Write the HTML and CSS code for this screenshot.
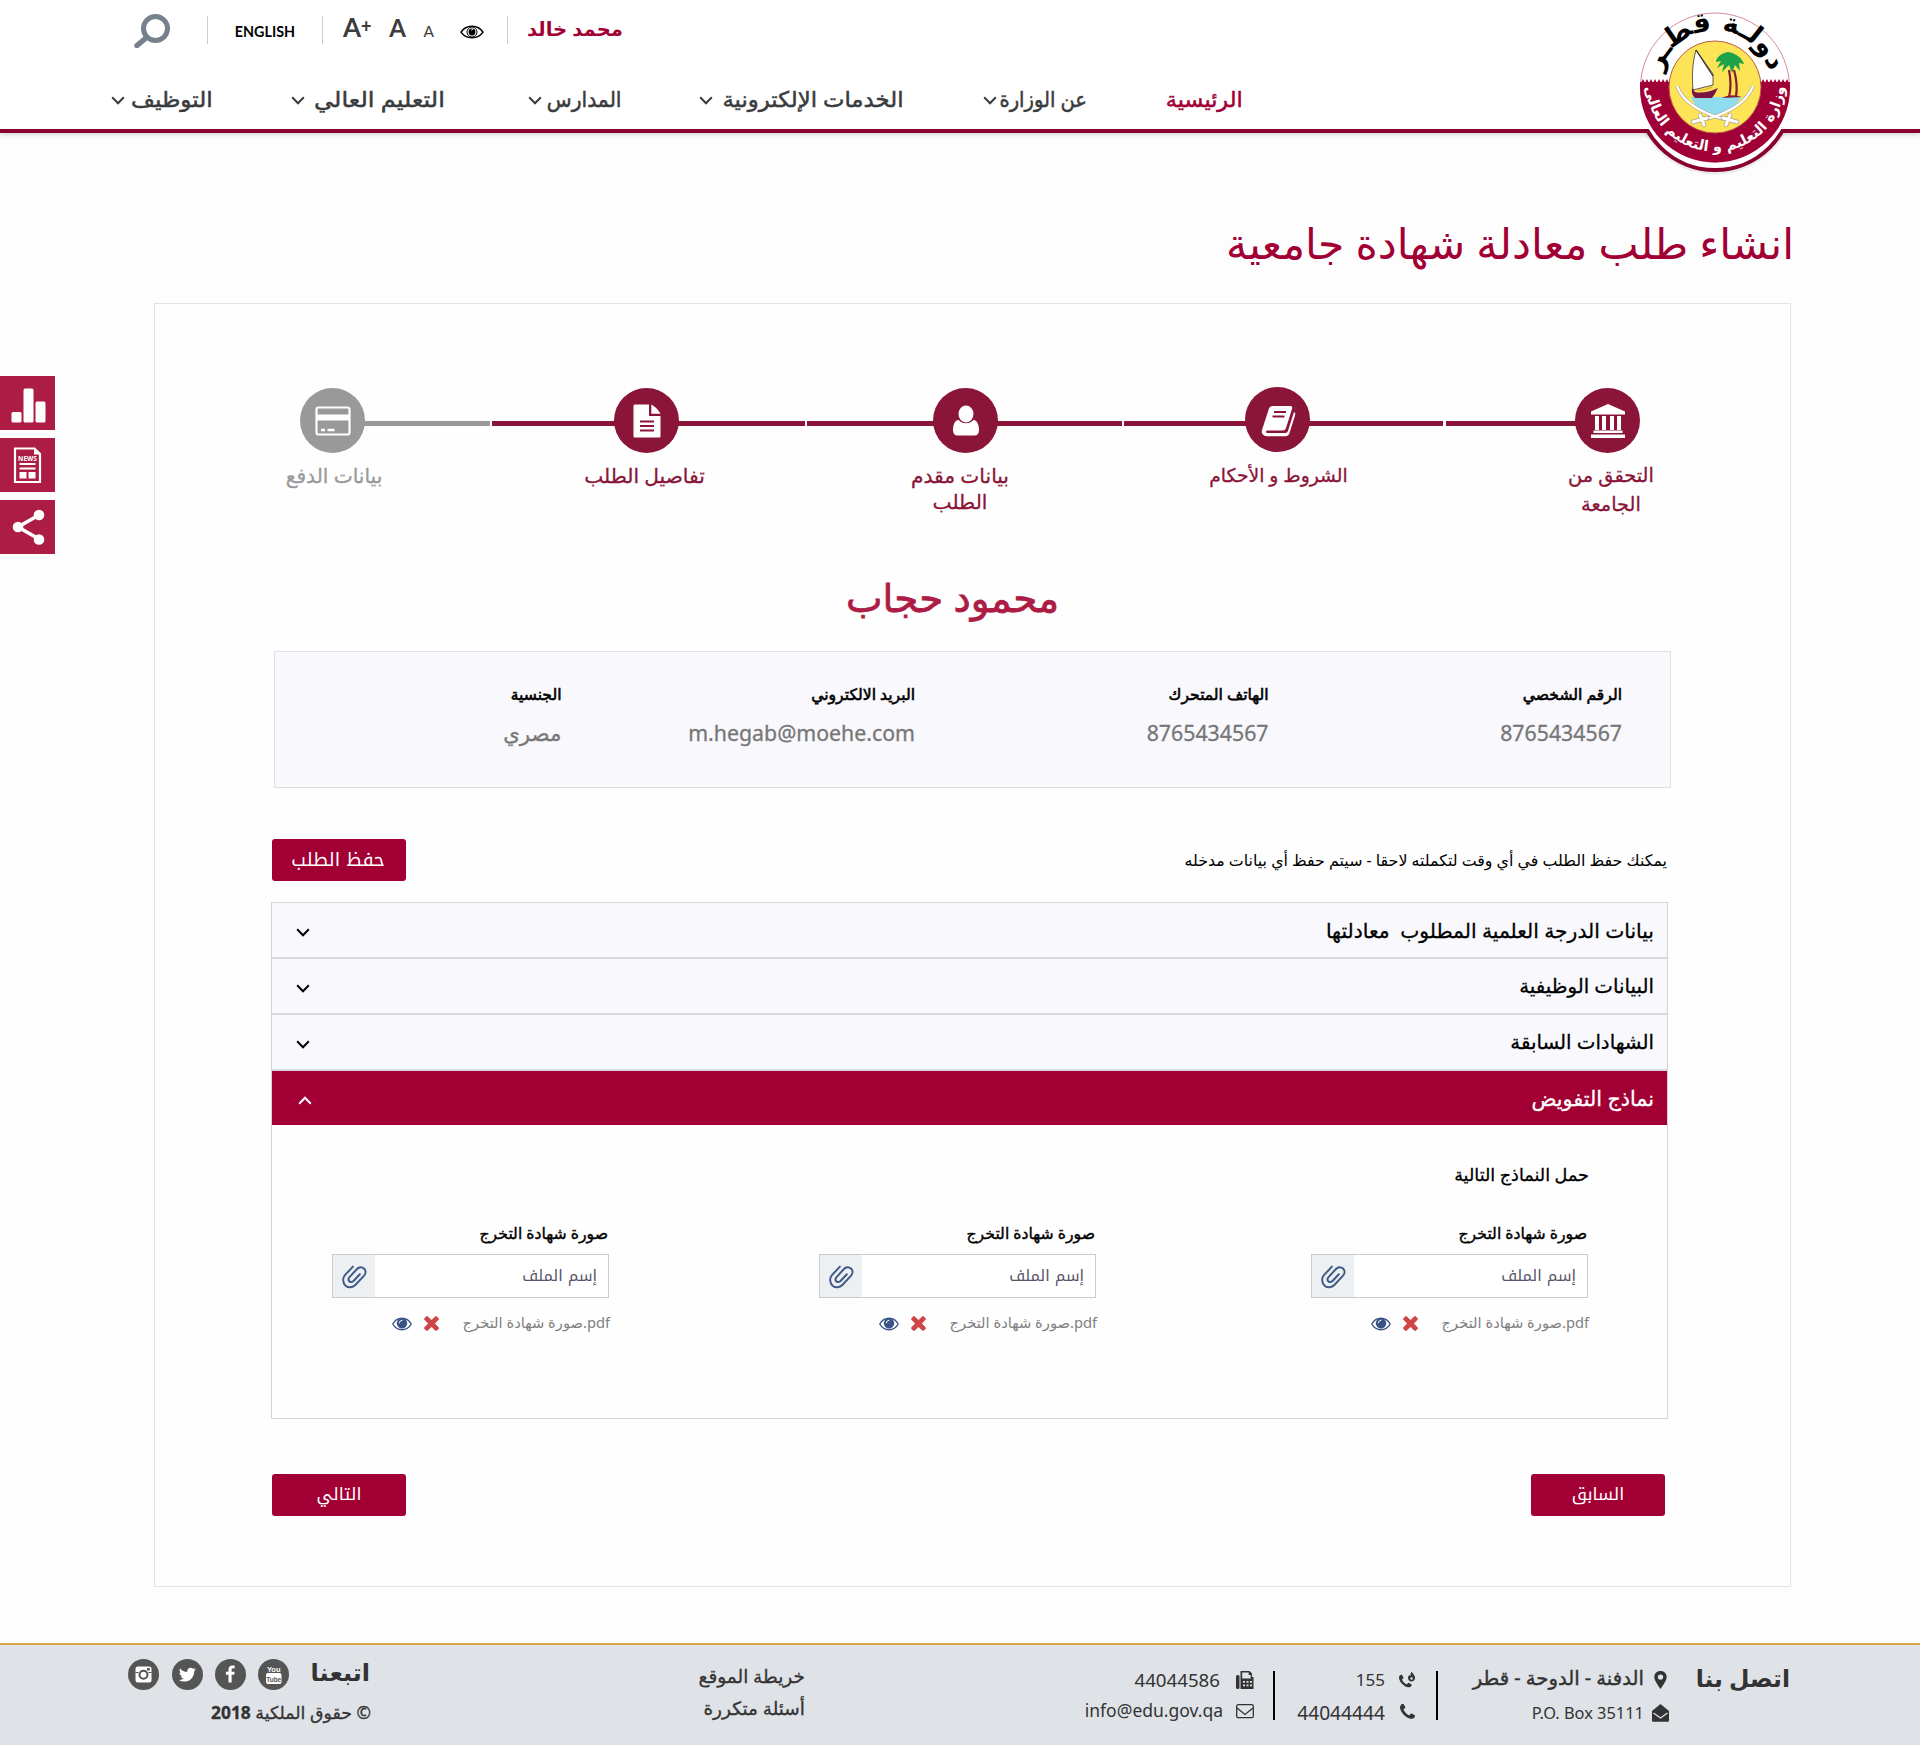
FILE: index.html
```html
<!DOCTYPE html>
<html lang="ar" dir="rtl">
<head>
<meta charset="utf-8">
<title>انشاء طلب معادلة شهادة جامعية</title>
<link rel="stylesheet" href="styles.css">
</head>
<body>
<svg width="0" height="0" class="defs" aria-hidden="true">
  <symbol id="chev" viewBox="0 0 14 9"><path d="M1.2 1.3 7 7.2l5.800-5.900" fill="none" stroke="currentColor" stroke-width="2"/></symbol>
  <symbol id="eye" viewBox="0 0 20 14"><path d="M.8 7C5-.6 15-.6 19.200 7 15 14.600 5 14.600.8 7z" fill="none" stroke="currentColor" stroke-width="1.400"/><circle cx="10" cy="6.300" r="5.200" fill="currentColor"/><path d="M7.300 5.800q.3-2.400 2.700-2.600" fill="none" stroke="#fff" stroke-width="1" stroke-linecap="round"/></symbol>
  <symbol id="times" viewBox="296 290 1200 1200"><path d="M1490 1322q0 40-28 68l-136 136q-28 28-68 28t-68-28l-294-294-294 294q-28 28-68 28t-68-28l-136-136q-28-28-28-68t28-68l294-294-294-294q-28-28-28-68t28-68l136-136q28-28 68-28t68 28l294 294 294-294q28-28 68-28t68 28l136 136q28 28 28 68t-28 68l-294 294 294 294q28 28 28 68z" transform="translate(0 -70)" fill="currentColor"/></symbol>
  <symbol id="clip" viewBox="0 0 24 24"><path d="M10.500 2.500 3 10.500C.3 13.600.6 18.200 3.500 20.800c2.800 2.400 6.800 1.900 9.300-.6l8.400-9c1.900-2.200 1.800-5-.1-6.800-2-1.800-4.800-1.600-6.700.4L7.200 12.600c-1.200 1.400-1.200 3 0 4.100 1.100 1 2.800.9 3.900-.4l6-6.500" fill="none" stroke="currentColor" stroke-width="1.900" stroke-linecap="round"/></symbol>
  <symbol id="phone" viewBox="192 192 1408 1408"><path d="M1600 1240q0 27-10 70.500t-21 68.500q-21 50-122 106-94 51-186 51-27 0-53-3.500t-57.500-12.500-47-14.500-55.500-20.500-49-18q-98-35-175-83-127-79-264-216t-216-264q-48-77-83-175-3-9-18-49t-20.500-55.500-14.500-47-12.500-57.500-3.500-53q0-92 51-186 56-101 106-122 25-11 68.500-21t70.500-10q14 0 21 3 18 6 53 76 11 19 30 54t35 63.500 31 53.500q3 4 17.500 25t21.500 35.500 7 28.500q0 20-28.500 50t-62 55-62 53-28.500 46q0 9 5 22.500t8.500 20.500 14 24 11.500 19q76 137 174 235t235 174q2 1 19 11.500t24 14 20.500 8.500 22.500 5q18 0 46-28.500t53-62 55-62 50-28.500q14 0 28.500 7t35.500 21.500 25 17.500q25 15 53.500 31t63.500 35 54 30q70 35 76 53 3 7 3 21z" fill="currentColor"/></symbol>
</svg>

<header class="header">
  <div class="topbar">
    <span class="user">محمد خالد</span>
    <i class="divider"></i>
    <svg class="look" viewBox="0 0 24 14"><path d="M1 7.200C6-.8 18-.8 23 7.200 18 14.600 6 14.600 1 7.200z" fill="none" stroke="#000" stroke-width="1.500"/><circle cx="12" cy="7" r="5" fill="none" stroke="#000" stroke-width="1"/><circle cx="12" cy="7" r="3.400"/><path d="M11.500 5.500q.2-1.500 1.700-1.300" stroke="#fff" fill="none"/></svg>
    <div class="sizes" dir="ltr"><span class="big">A<b>+</b></span><span class="mid">A</span><span class="small">A</span></div>
    <i class="divider"></i>
    <span class="lang">ENGLISH</span>
    <i class="divider"></i>
    <svg class="search" viewBox="0 0 36 34"><circle cx="21.500" cy="14.500" r="12" fill="none" stroke="#76818d" stroke-width="5"/><path d="M12.500 23.500 3 31.500" stroke="#76818d" stroke-width="5.500" stroke-linecap="round"/></svg>
  </div>
  <nav class="nav">
    <a class="on"><span>الرئيسية</span></a>
    <a><span>عن الوزارة</span><svg><use href="#chev"/></svg></a>
    <a><span>الخدمات الإلكترونية</span><svg><use href="#chev"/></svg></a>
    <a><span>المدارس</span><svg><use href="#chev"/></svg></a>
    <a><span>التعليم العالي</span><svg><use href="#chev"/></svg></a>
    <a><span>التوظيف</span><svg><use href="#chev"/></svg></a>
  </nav>
  <svg class="logo" viewBox="0 0 180 190">
    <defs>
      <clipPath id="under"><rect x="0" y="129" width="180" height="61"/></clipPath>
      <clipPath id="lower"><rect x="0" y="82" width="180" height="90"/></clipPath>
      <path id="arcTop" d="M34.500 79A56 56 0 0 1 145.500 79"/>
      <path id="arcLow" d="M20.500 82A69.500 69.500 0 0 0 159.500 82"/>
    </defs>
    <rect x="23" y="120" width="134" height="14" fill="#fff"/>
    <g clip-path="url(#under)"><circle cx="90" cy="93.500" r="81" class="glow"/><circle cx="90" cy="92.500" r="77.500" fill="#fff" stroke="#8a0030" stroke-width="4"/></g>
    <circle cx="90" cy="87.500" r="74.500" fill="#fff" stroke="#d98aa3" stroke-width="1"/>
    <circle cx="90" cy="87.500" r="75" fill="#a00036" clip-path="url(#lower)"/>
    <path d="M16 83l2-4 2 4 2-4 2 4 2-4 2 4 2-4 2 4 2-4 2 4 2-4 2 4 2-4 2 4M136 83l2-4 2 4 2-4 2 4 2-4 2 4 2-4 2 4 2-4 2 4 2-4 2 4 2-4 2 4" fill="#a00036"/>
    <circle cx="90" cy="87" r="46" fill="#fde456" stroke="#b85a4a" stroke-width="1"/>
    <path d="M71 50c-4 14-4 28-3 40l20-5V74z" fill="#fff" stroke="#333" stroke-width=".8"/>
    <path d="M71 50l17 26" stroke="#333" stroke-width="1.300"/>
    <path d="M66 97h50l-8 12q-18 14-36 0z" fill="#8fdcef"/>
    <path d="M67 88l3 4q10 2 23-4-3 6-6 10H70q-4-4-3-10z" fill="#7b1541"/>
    <path d="M72 90q8 1 15-3" stroke="#e7b53a" stroke-width="1.500" fill="none"/>
    <path d="M104 70q3 15 0 27M109 70q4 14 2 27" stroke="#8b1a2b" stroke-width="2.200" fill="none"/>
    <path d="M97 98q8-5 20-1z" fill="#8b1a2b"/>
    <path d="M103 52c-6 1-12 5-12 10l5-1-4 7 7-4-2 8 7-7 3 8 3-8 5 6-1-8 5 1c-2-6-8-11-16-12z" fill="#1da34a"/>
    <path d="M52 86q8 22 46 33M128 86q-8 22-46 33" fill="none" stroke="#a79f8a" stroke-width="3.600"/>
    <path d="M52 86q8 22 46 33M128 86q-8 22-46 33" fill="none" stroke="#fff" stroke-width="2.200"/>
    <path d="M98 118l14 4M101 125l4-10M82 118l-14 4M79 125l-4-10" stroke="#a79f8a" stroke-width="4.500" stroke-linecap="round"/>
    <path d="M98 118l14 4M101 125l4-10M82 118l-14 4M79 125l-4-10" stroke="#fff" stroke-width="3" stroke-linecap="round"/>
    <text class="state"><textPath href="#arcTop" startOffset="50%" text-anchor="middle">دولـة قطـر</textPath></text>
    <text class="ministry"><textPath href="#arcLow" startOffset="50%" text-anchor="middle">وزارة التعليم و التعليم العالى</textPath></text>
  </svg>
</header>

<aside class="side">
  <a><svg viewBox="0 0 55 54"><g fill="#fff"><rect x="11.500" y="36" width="10" height="10.500" rx="1.500"/><rect x="23.500" y="12.500" width="10" height="34" rx="1.500"/><rect x="35.500" y="25.500" width="10" height="21" rx="1.500"/></g></svg></a>
  <a><svg viewBox="0 0 55 54"><path d="M15 10.500h19.500l5.500 5.500v28H15z" fill="none" stroke="#fff" stroke-width="2.200"/><path d="M34 10v6.500h6.500z" fill="#fff"/><text x="27.500" y="23" class="news">NEWS</text><g fill="#fff"><rect x="19.500" y="25" width="16" height="2"/><rect x="19.500" y="29.500" width="16" height="2"/><rect x="19.500" y="34" width="7" height="6.500"/><rect x="28.500" y="34" width="7" height="6.500"/></g></svg></a>
  <a><svg viewBox="0 0 55 54"><path d="M39 15 18 27l21 12" fill="none" stroke="#fff" stroke-width="3.600"/><g fill="#fff"><circle cx="39" cy="15" r="5.300"/><circle cx="18" cy="27" r="5.300"/><circle cx="39" cy="39.500" r="5.300"/></g></svg></a>
</aside>

<main>
  <h1>انشاء طلب معادلة شهادة جامعية</h1>
  <section class="card">
    <ol class="steps">
      <li class="s1"><div class="rail"><b><svg viewBox="0 0 36 36"><g fill="#fff"><path d="M18 1 35 8.500v3H1v-3z"/><path d="M5 13h4v14H5zM12 13h4v14h-4zM20 13h4v14h-4zM27 13h4v14h-4z"/><path d="M3.500 27.500h29V30h-29zM1 31.500h34V35H1z"/></g></svg></b></div><p>التحقق من<br>الجامعة</p></li>
      <li class="s2"><div class="rail"><b><svg viewBox="0 0 36 36"><path d="M13 4h17c2 0 2.600 1 2 3l-6 19c-.5 1.700-1.500 2.500-3.500 2.500H7.500c-2 0-2 2.500 0 2.500H25c2 0 2.600-1 3.200-2.800L34 10c1.500 1 1.500 2 1 3.500L29.500 31c-.8 2.300-2 3.200-4.300 3.200H7c-4 0-6-3-5-6.200L8.500 8C9.300 5.200 10.500 4 13 4z" fill="#fff"/><path d="M14 10h12M12.500 14.500h12" stroke="#8a1538" stroke-width="2"/></svg></b></div><p>الشروط و الأحكام</p></li>
      <li class="s3"><div class="rail"><b><svg viewBox="0 0 36 36"><ellipse cx="18" cy="11" rx="7.500" ry="8.500" fill="#fff"/><path d="M10.500 17c2 2 4.500 3.300 7.500 3.300s5.500-1.300 7.500-3.300c4 .5 5.500 5 5.500 10.500 0 3-1.800 5-4.600 5H9.600C6.800 32.500 5 30.500 5 27.500 5 22 6.500 17.500 10.500 17z" fill="#fff"/></svg></b></div><p>بيانات مقدم<br>الطلب</p></li>
      <li class="s4"><div class="rail"><b><svg viewBox="0 0 36 36"><path d="M6 1.500h14V13h11.500v20c0 1-.5 1.500-1.500 1.500H6c-1 0-1.500-.5-1.500-1.500V3c0-1 .5-1.500 1.500-1.500z" fill="#fff"/><path d="M22.300 1.500c3.500 1.800 7.500 6 9.200 9.200h-9.200z" fill="#fff"/><path d="M11 18.500h14M11 23h14M11 27.500h14" stroke="#8a1538" stroke-width="2.200"/></svg></b></div><p>تفاصيل الطلب</p></li>
      <li class="s5"><div class="rail"><b><svg viewBox="0 0 36 36"><rect x="1.500" y="4.500" width="33" height="27" rx="2" fill="none" stroke="#fff" stroke-width="2.200"/><path d="M2 11.500h32v6H2z" fill="#fff"/><path d="M6 27h4M12.500 27h7" stroke="#fff" stroke-width="2.400"/></svg></b></div><p>بيانات الدفع</p></li>
    </ol>

    <h2>محمود حجاب</h2>

    <dl class="info">
      <div><dt>الرقم الشخصي</dt><dd>8765434567</dd></div>
      <div><dt>الهاتف المتحرك</dt><dd>8765434567</dd></div>
      <div><dt>البريد الالكتروني</dt><dd>m.hegab@moehe.com</dd></div>
      <div><dt>الجنسية</dt><dd>مصري</dd></div>
    </dl>

    <div class="save">
      <p>يمكنك حفظ الطلب في أي وقت لتكملته لاحقا - سيتم حفظ أي بيانات مدخله</p>
      <button>حفظ الطلب</button>
    </div>

    <div class="accordion">
      <div class="head degree"><span>بيانات الدرجة العلمية المطلوب &nbsp;معادلتها</span><svg><use href="#chev"/></svg></div>
      <div class="head"><span>البيانات الوظيفية</span><svg><use href="#chev"/></svg></div>
      <div class="head"><span>الشهادات السابقة</span><svg><use href="#chev"/></svg></div>
      <div class="head open"><span>نماذج التفويض</span><svg><use href="#chev"/></svg></div>
      <div class="panel">
        <h3>حمل النماذج التالية</h3>
        <div class="fields">
          <div class="field"><label>صورة شهادة التخرج</label><div class="input"><span>إسم الملف</span><i><svg><use href="#clip"/></svg></i></div><div class="file"><span>pdf.صورة شهادة التخرج</span><svg class="del"><use href="#times"/></svg><svg class="view"><use href="#eye"/></svg></div></div>
          <div class="field"><label>صورة شهادة التخرج</label><div class="input"><span>إسم الملف</span><i><svg><use href="#clip"/></svg></i></div><div class="file"><span>pdf.صورة شهادة التخرج</span><svg class="del"><use href="#times"/></svg><svg class="view"><use href="#eye"/></svg></div></div>
          <div class="field"><label>صورة شهادة التخرج</label><div class="input"><span>إسم الملف</span><i><svg><use href="#clip"/></svg></i></div><div class="file"><span>pdf.صورة شهادة التخرج</span><svg class="del"><use href="#times"/></svg><svg class="view"><use href="#eye"/></svg></div></div>
        </div>
      </div>
    </div>

    <div class="actions"><button>السابق</button><button>التالي</button></div>
  </section>
</main>

<footer class="footer">
  <h4 class="contact">اتصل بنا</h4>
  <ul class="col address">
    <li><svg viewBox="0 0 17 18"><path d="M8.500 0C4.800 0 2.300 2.600 2.300 6c0 3.200 3.500 8 6.200 12 2.700-4 6.200-8.800 6.200-12 0-3.400-2.500-6-6.200-6zm0 3.400a2.700 2.700 0 1 1 0 5.400 2.700 2.700 0 0 1 0-5.400z"/></svg><span class="place">الدفنة - الدوحة - قطر</span></li>
    <li><svg viewBox="0 0 17 18"><path d="M0 7 8.500 0 17 7v9.500c0 .8-.5 1.300-1.300 1.300H1.300C.5 17.800 0 17.300 0 16.500z"/><path d="M1.500 9l7 5 7-5" fill="none" stroke="#dfe2e7" stroke-width="1.200"/></svg><span dir="ltr">P.O. Box 35111</span></li>
  </ul>
  <i class="bar"></i>
  <ul class="col phones">
    <li><svg viewBox="0 0 18 18"><g transform="translate(0 4) scale(.0095) translate(-192 -192)"><path d="M1600 1240q0 27-10 70.500t-21 68.500q-21 50-122 106-94 51-186 51-27 0-53-3.500t-57.500-12.500-47-14.500-55.500-20.500-49-18q-98-35-175-83-127-79-264-216t-216-264q-48-77-83-175-3-9-18-49t-20.500-55.500-14.500-47-12.500-57.500-3.500-53q0-92 51-186 56-101 106-122 25-11 68.500-21t70.500-10q14 0 21 3 18 6 53 76 11 19 30 54t35 63.500 31 53.500q3 4 17.500 25t21.500 35.500 7 28.500q0 20-28.500 50t-62 55-62 53-28.500 46q0 9 5 22.500t8.500 20.500 14 24 11.500 19q76 137 174 235t235 174q2 1 19 11.500t24 14 20.500 8.500 22.500 5q18 0 46-28.500t53-62 55-62 50-28.500q14 0 28.500 7t35.500 21.500 25 17.500q25 15 53.500 31t63.500 35 54 30q70 35 76 53 3 7 3 21z"/></g><path d="M13.500 0c.8 2.600 3.500 3.500 3.500 6.700 0 2.400-1.700 3.900-3.800 3.900S9.500 9 9.500 7c0-1.600.8-2.600 1.600-3.500.2 1 .5 1.500 1 1.800C12 3.500 12.300 1.500 13.500 0z"/><circle cx="13.300" cy="7.500" r="1.300" fill="#dfe2e7"/></svg><span class="hot">155</span></li>
    <li><svg class="handset"><use href="#phone"/></svg><span>44044444</span></li>
  </ul>
  <i class="bar"></i>
  <ul class="col fax">
    <li><svg viewBox="0 0 18 18"><rect x="0" y="4" width="3.500" height="14" rx="1.500"/><path d="M5 0h8.500L16 2.500V6h1.500v12H4.500V0z"/><path d="M6.200 1.500h6.500V4h2v3.500H6.200z" fill="#dfe2e7"/><path d="M7 10h2v1.700H7zm3.500 0h2v1.700h-2zM14 10h2v1.700h-2zM7 13.500h2v1.700H7zm3.500 0h2v1.700h-2zm3.500 0h2v1.700h-2z" fill="#dfe2e7"/></svg><span class="num">44044586</span></li>
    <li><svg class="mail" viewBox="0 0 18 18"><rect x=".7" y="2.700" width="16.600" height="13" rx="1.500" fill="none" stroke="#333" stroke-width="1.300"/><path d="M1 6l8 6.500L17 6" fill="none" stroke="#333" stroke-width="1.300"/></svg><span class="email">info@edu.gov.qa</span></li>
  </ul>
  <ul class="links"><li>خريطة الموقع</li><li>أسئلة متكررة</li></ul>
  <div class="follow">
    <div class="social">
      <h4>اتبعنا</h4>
      <svg viewBox="0 0 31 31"><circle cx="15.500" cy="15.500" r="15.500" fill="#555"/><rect x="8" y="14" width="15.500" height="11" rx="2" fill="#fff"/><text x="15.700" y="12.500" class="yt">You</text><text x="15.700" y="22.500" class="yt tube">Tube</text></svg>
      <svg viewBox="0 0 31 31"><circle cx="15.500" cy="15.500" r="15.500" fill="#555"/><path transform="translate(6 6.500) scale(.0102)" fill="#fff" d="M1343 12v264h-157q-86 0-116 36t-30 108v189h293l-39 296h-254v759h-306v-759h-255v-296h255v-218q0-186 104-288.500t277-102.500q147 0 228 12z"/></svg>
      <svg viewBox="0 0 31 31"><circle cx="15.500" cy="15.500" r="15.500" fill="#555"/><path transform="translate(5.700 6) scale(.0108)" fill="#fff" d="M1684 408q-67 98-162 167 1 14 1 42 0 130-38 259.500t-115.500 248.500-184.500 210.500-258 146-323 54.500q-271 0-496-145 35 4 78 4 225 0 401-138-105-2-188-64.500t-114-159.500q33 5 61 5 43 0 85-11-112-23-185.500-111.500t-73.500-205.500v-4q68 38 146 41-66-44-105-115t-39-154q0-88 44-163 121 149 294.500 238.500t371.500 99.500q-8-38-8-74 0-134 94.500-228.500t228.500-94.500q140 0 236 102 109-21 205-78-37 115-142 178 93-10 186-50z"/></svg>
      <svg viewBox="0 0 31 31"><circle cx="15.500" cy="15.500" r="15.500" fill="#555"/><rect x="7.500" y="7.500" width="16" height="16" rx="2.500" fill="#fff"/><path d="M7.500 13.500h3M20.500 13.500h3" stroke="#555" stroke-width="1"/><circle cx="15.500" cy="15.800" r="4" fill="none" stroke="#555" stroke-width="2"/><rect x="19" y="9" width="2.800" height="2.500" fill="#555"/></svg>
    </div>
    <p class="copy">© حقوق الملكية <b>2018</b></p>
  </div>
</footer>
</body>
</html>
```
FILE: styles.css
```css
* { box-sizing: border-box; margin: 0; padding: 0; }
body { width: 1920px; background: #fdfdfd; font-family: "Noto Sans", "DejaVu Sans", sans-serif; color: #000; white-space: nowrap; }
ul, ol { list-style: none; }
svg { display: block; flex: none; }
.defs { position: absolute; }

/* header */
.header { position: relative; height: 133px; background: #fff; border-bottom: 4px solid #8a0030; box-shadow: 0 2px 5px rgba(0,0,0,.16); }
.topbar { display: flex; align-items: center; height: 58px; padding: 0 1298px 0 134px; }
.user { width: 96px; margin-right: -1px; padding-left: 0; font-size: 19.600px; font-weight: 700; line-height: 28px; color: #a20034; }
.user + .divider { margin-right: 19px; }
.divider { width: 1px; height: 28px; background: #ccc; margin-top: 2px; }
.look { width: 24px; height: 14px; margin: 6px 23px 0 0; }
.sizes { display: flex; align-items: baseline; justify-content: space-between; width: 91px; margin-right: 26px; font-family: Lato, "Noto Sans", sans-serif; line-height: 30px; color: #3c3c3c; }
.sizes .big { font-size: 26px; font-weight: 700; }
.sizes b { font-size: 18px; position: relative; top: -4px; font-weight: 900; }
.sizes .mid { font-size: 24px; font-weight: 700; }
.sizes .small { font-size: 15.500px; }
.sizes + .divider { margin-right: 20px; }
.lang { width: 61px; margin: 6px 27px 0 0; font: 700 14.300px/20px Lato, "Noto Sans", sans-serif; }
.lang + .divider { margin-right: 26px; }
.search { width: 36px; height: 34px; margin: 3px 37px 0 0; }

.nav { display: flex; height: 71px; padding: 10px 677px 0 0; align-items: center; }
.nav a { display: flex; justify-content: space-between; align-items: center; font-size: 21.700px; line-height: 30px; color: #3a3b3d; }
.nav span { transform-origin: right; -webkit-text-stroke: .5px; }
.nav svg { width: 14px; height: 9px; margin-top: 4px; }
.nav a.on { color: #a20034; width: 76px; }
.nav a:nth-child(2) { width: 104px; margin-right: 80px; }
.nav a:nth-child(3) { width: 204px; margin-right: 80px; }
.nav a:nth-child(4) { width: 94px; margin-right: 77px; }
.nav a:nth-child(5) { width: 154px; margin-right: 83px; }
.nav a:nth-child(6) { width: 102px; margin-right: 78px; }
.nav a:nth-child(1) span { transform: scaleX(1.030); }
.nav a:nth-child(2) span { width: 88px; transform: scaleX(.9); }
.nav a:nth-child(3) span { transform: scaleX(1.050); }
.nav a:nth-child(4) span { transform: scaleX(.94); }
.nav a:nth-child(5) span { transform: scaleX(1.110); }
.nav a:nth-child(6) span { transform: scaleX(1.065); }

.logo { position: absolute; left: 1625px; top: 0; width: 180px; height: 190px; }
.glow { fill: rgba(0,0,0,.07); }
.state { font: 700 27px "DejaVu Sans", sans-serif; fill: #000; }
.ministry { font: 700 14.500px "DejaVu Sans", sans-serif; fill: #fff; }

/* side tools */
.side { position: absolute; left: 0; top: 376px; display: flex; flex-direction: column; gap: 8px; }
.side a { width: 55px; height: 54px; background: #ad1c45; }
.news { font: 700 6.500px "Noto Sans", sans-serif; fill: #fff; text-anchor: middle; direction: ltr; }

/* page */
h1 { margin: 80px 126px 0 0; height: 60px; font-size: 42.100px; font-weight: 400; line-height: 60px; color: #a20034; transform: scaleX(1.012); transform-origin: right; }
.card { margin: 30px 129px 0 154px; height: 1284px; border: 1px solid #e2e2e2; background: #fefefe; }

.steps { display: grid; grid-template-columns: 224px 321px 317px 315px 219px; width: 1396px; height: 133px; margin: 84px 122px 0 0; }
.steps li { color: #8a1538; font-size: 20.200px; }
.rail { display: flex; height: 66px; background: linear-gradient(#8a1538, #8a1538) center 33px / calc(100% - 2px) 5px no-repeat; }
.rail b { display: flex; width: 65px; height: 65px; border-radius: 50%; background: #8a1538; align-items: center; justify-content: center; }
.rail svg { width: 36px; height: 36px; }
.steps p { margin-top: 8px; line-height: 26px; text-align: center; -webkit-text-stroke: .3px; }
.s1 .rail { background-size: 160px 5px; background-position: 2px 33px; }
.s1 b { margin-right: 28px; }
.s1 p { width: 86px; margin-right: 14px; line-height: 29px; font-size: 19.400px; margin-top: 6px; }
.s2 b { margin: -1px 134px 0 0; }
.s2 p { width: 139px; margin-right: 96px; font-size: 18.800px; }
.s3 b { margin-right: 125px; }
.s3 p { width: 98px; margin-right: 114px; }
.s4 b { margin-right: 127px; }
.s4 p { width: 121px; margin-right: 101px; }
.s5 .rail { background: linear-gradient(#999, #999) 61px 33px / 157px 5px no-repeat; }
.s5 b { margin-right: 126px; background: #999; }
.s5 p { width: 98px; margin-right: 108px; color: #999; }

h2 { width: 211px; margin: 46px 731px 0 0; font-size: 38.800px; font-weight: 400; line-height: 60px; color: #ad1c45; -webkit-text-stroke: .8px; }

.info { display: flex; width: 1397px; height: 137px; margin: 24px 119px 0 0; padding: 30px 48px 0 0; background: #f8f8fd; border: 1px solid #e0e0e2; }
.info div { flex: none; width: 353.500px; }
.info dt { font-size: 15.600px; line-height: 24px; -webkit-text-stroke: .6px; }
.info dd { margin-top: 12px; font-size: 21.300px; line-height: 30px; color: #777; -webkit-text-stroke: .3px; }

button { width: 134px; height: 42px; border: 0; border-radius: 3px; background: #a20034; color: #fff; font: 17.300px/38px "Noto Kufi Arabic", "DejaVu Sans", sans-serif; }
.save { display: flex; justify-content: space-between; align-items: center; width: 1395px; margin: 51px 123px 0 0; }
.save p { font-size: 15.850px; line-height: 26px; }
.save button { padding-left: 0; padding-right: 2px; font-size: 18.800px; }

.accordion { width: 1397px; height: 517px; margin: 21px 122px 0 0; border: 1px solid #d4d4d6; background: #fefefe; }
.head { display: flex; justify-content: space-between; align-items: center; height: 56px; padding: 0 13px 1px 24px; border-bottom: 2px solid #d9d9db; background: #f8f8fd; font-size: 19.800px; line-height: 30px; }
.head span { -webkit-text-stroke: .3px; }
.degree { font-size: 20.300px; }
.head svg { width: 14px; height: 9px; margin-top: 5px; }
.head.open { height: 54px; background: #a20034; border: 0; color: #fff; padding-left: 26px; font-size: 20.700px; }
.head.open svg { transform: rotate(180deg); }
.panel { padding: 37px 78px 0 60px; }
.panel h3 { font-size: 17.600px; font-weight: 400; line-height: 24px; -webkit-text-stroke: .3px; }
.fields { display: flex; margin: 35px 1px 0 0; }
.field { width: 277px; flex: none; }
.field:nth-child(2) { margin-right: 215px; }
.field:nth-child(3) { margin-right: 210px; }
.field label { display: block; padding-right: 1px; font-size: 15.700px; line-height: 24px; -webkit-text-stroke: .4px; }
.input { display: flex; justify-content: space-between; height: 44px; margin-top: 9px; border: 1px solid #c9cbce; background: #fff; }
.input span { padding-right: 11px; font: 15.700px/43px "Noto Kufi Arabic", "DejaVu Sans", sans-serif; color: #56566a; }
.input i { display: flex; align-items: center; justify-content: center; width: 42px; padding-left: 1px; background: #ecf0f3; color: #3f5a86; }
.input svg { width: 25px; height: 25px; }
.file { display: flex; align-items: center; height: 20px; margin: 14px -1px 0 0; font-size: 14.700px; color: #808080; }
.file span { width: 148px; line-height: 20px; }
.del { width: 15px; height: 15px; margin: 3px 23px 0 0; color: #cf4545; }
.view { width: 20px; height: 14px; margin: 3px 12px 0 0; color: #3a5488; }
.actions { display: flex; justify-content: space-between; width: 1393px; margin: 55px 125px 0 0; }

/* footer */
.footer { display: flex; height: 102px; margin-top: 56px; padding-right: 130px; border-top: 2px solid #d9a441; background: #dfe2e7; color: #333; fill: #333; }
.footer h4 { font-size: 23.500px; line-height: 32px; }
.contact { width: 94px; margin-top: 17px; }
.col { margin-top: 19px; }
.col li { display: flex; height: 33px; align-items: center; font-size: 17.500px; line-height: 26px; }
.col svg { width: 17px; height: 18px; margin: -2px 0 0 8px; color: #333; }
.col span { margin-top: -2px; }
.address { width: 205px; margin-right: 27px; }
.address li { font-size: 16.400px; }
.address .place { margin-top: -5px; font-size: 19.700px; -webkit-text-stroke: .4px; }
.bar { width: 2px; height: 49px; margin-top: 26px; background: #000; }
.address + .bar { margin-right: 26px; }
.phones { width: 127px; margin-right: 20px; }
.phones li { font-size: 19.200px; }
.phones .hot { font-size: 17px; }
.phones svg { margin-left: 14px; }
.phones .handset { width: 15px; height: 16px; margin: -4px 1px 0 15px; }
.phones + .bar { margin-right: 14px; }
.fax { width: 170px; margin-right: 19px; }
.fax svg { margin-left: 13px; width: 18px; }
.fax .num { margin-right: 3px; font-size: 18.700px; }
.fax .email { margin-top: -8px; }
.fax .mail { margin-top: -6px; }
.links { width: 108px; margin: 15px 279px 0 0; font-size: 18.500px; line-height: 32px; -webkit-text-stroke: .3px; }
.follow { width: 242px; margin-right: 327px; }
.social { display: flex; height: 40px; margin-top: 9px; align-items: center; }
.social h4 { width: 58px; margin: -4px 0 0 23px; font-size: 24px; }
.social svg { width: 31px; height: 31px; margin-left: 12.200px; }
.yt { font: 700 7.500px "Liberation Sans", sans-serif; fill: #fff; text-anchor: middle; direction: ltr; }
.yt.tube { fill: #555; font-size: 6.500px; }
.copy { margin: 4px -1px 0 0; font-size: 17.400px; line-height: 28px; -webkit-text-stroke: .3px; }
```
